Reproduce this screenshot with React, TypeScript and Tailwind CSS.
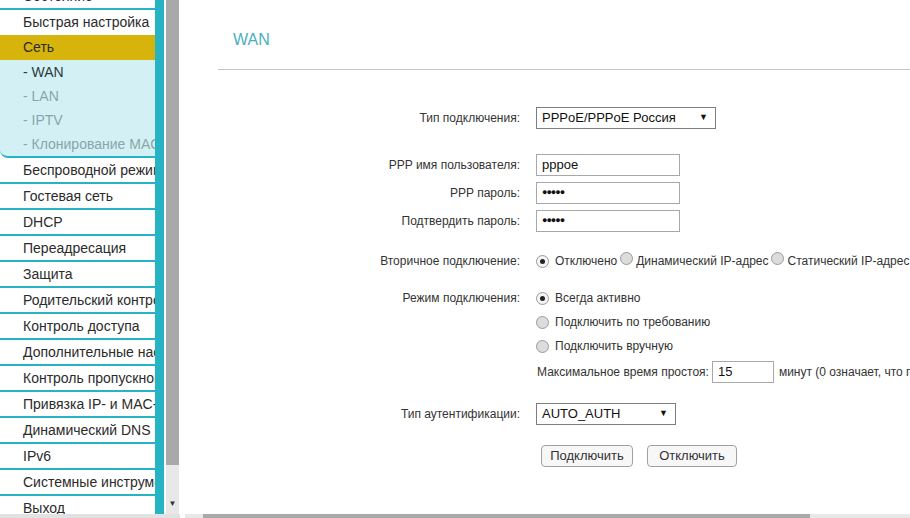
import React from "react";

const menuTop = ["Быстрая настройка"];
const subItems = ["- WAN", "- LAN", "- IPTV", "- Клонирование MAC"];
const menuRest = [
  "Беспроводной режим",
  "Гостевая сеть",
  "DHCP",
  "Переадресация",
  "Защита",
  "Родительский контроль",
  "Контроль доступа",
  "Дополнительные настройки",
  "Контроль пропускной способности",
  "Привязка IP- и MAC-адресов",
  "Динамический DNS",
  "IPv6",
  "Системные инструменты",
  "Выход",
];

function Line() {
  return <div className="h-[2px] bg-[#26b4c4] shrink-0" />;
}

function MenuRow({ text }: { text: string }) {
  return (
    <div className="h-[24px] shrink-0 bg-white pl-[23px] leading-[24px] whitespace-nowrap text-[14px] text-[#2b2b2b]">
      {text}
    </div>
  );
}

function Radio({ checked }: { checked?: boolean }) {
  return (
    <span
      className={`inline-flex h-[13px] w-[13px] shrink-0 items-center justify-center rounded-full border border-[#9a9a9a] ${
        checked ? "bg-[#f4f4f4]" : "bg-[#dcdcdc]"
      }`}
    >
      {checked && <span className="h-[5px] w-[5px] rounded-full bg-[#222]" />}
    </span>
  );
}

function Select({ value, width }: { value: string; width: string }) {
  return (
    <div
      className={`flex h-[22px] ${width} items-center justify-between border border-[#7d7d7d] bg-white pl-[5px] pr-[7px] text-[13px] text-[#111]`}
    >
      <span>{value}</span>
      <span className="text-[9px]">▼</span>
    </div>
  );
}

function TextInput({ value, width, dots }: { value: string; width: string; dots?: boolean }) {
  return (
    <div
      className={`flex h-[22px] ${width} items-center border border-[#a8a8a8] bg-white pl-[5px] ${
        dots ? "text-[9px] tracking-[-1px]" : "text-[13px]"
      } text-[#111]`}
    >
      {value}
    </div>
  );
}

function Row({ label, children, className = "" }: { label?: string; children: React.ReactNode; className?: string }) {
  return (
    <div className={`flex items-center ${className}`}>
      <div className="w-[335px] shrink-0 text-right text-[12px] text-[#333]">{label}</div>
      <div className="ml-[16px] flex items-center">{children}</div>
    </div>
  );
}

export default function App() {
  return (
    <div
      className="flex h-[518px] w-[910px] overflow-hidden bg-white"
      style={{ fontFamily: '"Liberation Sans", Arial, sans-serif' }}
    >
      {/* left frame */}
      <div className="flex w-[180px] shrink-0 flex-col">
        <div className="flex min-h-0 flex-1">
          <div className="flex w-[155px] shrink-0 flex-col overflow-hidden">
            <div className="-mt-[16px]">
              <MenuRow text="Состояние" />
            </div>
            <Line />
            {menuTop.map((t) => (
              <div key={t} className="h-[25px] bg-white pl-[23px] leading-[25px] text-[14px] text-[#2b2b2b]">
                {t}
              </div>
            ))}
            <div className="h-[25px] shrink-0 bg-[#d6b40c] pl-[23px] leading-[25px] text-[14px] text-[#2b2b2b]">
              Сеть
            </div>
            <div className="shrink-0 rounded-bl-[8px] border-b-2 border-[#26b4c4] bg-[#d3f1f5]">
              {subItems.map((s, i) => (
                <div
                  key={s}
                  className={`h-[24px] pl-[23px] leading-[24px] whitespace-nowrap text-[14px] ${
                    i === 0 ? "text-[#2b3a3d]" : "text-[#8aa5aa]"
                  }`}
                >
                  {s}
                </div>
              ))}
            </div>
            {menuRest.map((t, i) => (
              <React.Fragment key={t}>
                {i > 0 && <Line />}
                <MenuRow text={t} />
              </React.Fragment>
            ))}
          </div>
          <div className="w-[9px] shrink-0 bg-[#26b4c4]" />
          <div className="w-[2px] shrink-0 bg-white" />
          <div className="flex w-[13px] shrink-0 flex-col bg-[#e8e8e8]">
            <div className="h-[465px] bg-[#a9a9a9]" />
            <div className="flex flex-1 items-end justify-center pb-[4px] text-[8px] text-[#333]">▼</div>
          </div>
        </div>
        <div className="h-[4px] shrink-0 bg-[#e2e2e2]" />
      </div>

      <div className="w-[5px] shrink-0" />

      {/* content frame */}
      <div className="flex min-w-0 flex-1 flex-col">
        <div className="min-h-0 flex-1 overflow-hidden">
          <div className="h-[69px] pl-[48px] pt-[31px] text-[16px] leading-[18px] text-[#4aafc0]">WAN</div>
          <div className="ml-[33px] h-[1px] bg-[#c4c4c4]" />

          <Row label="Тип подключения:" className="mt-[37px]">
            <Select value="PPPoE/PPPoE Россия" width="w-[180px]" />
          </Row>

          <Row label="PPP имя пользователя:" className="mt-[25px]">
            <TextInput value="pppoe" width="w-[144px]" />
          </Row>
          <Row label="PPP пароль:" className="mt-[6px]">
            <TextInput value="●●●●●" width="w-[144px]" dots />
          </Row>
          <Row label="Подтвердить пароль:" className="mt-[6px]">
            <TextInput value="●●●●●" width="w-[144px]" dots />
          </Row>

          <Row label="Вторичное подключение:" className="mt-[19px] h-[20px]">
            <div className="flex items-center whitespace-nowrap text-[12px] text-[#333]">
              <Radio checked />
              <span className="ml-[6px]">Отключено</span>
              <span className="ml-[3px]"><Radio /></span>
              <span className="ml-[3px]">Динамический IP-адрес</span>
              <span className="ml-[2px]"><Radio /></span>
              <span className="ml-[4px]">Статический IP-адрес</span>
            </div>
          </Row>

          <Row label="Режим подключения:" className="mt-[17px] h-[20px]">
            <div className="flex items-center text-[12px] text-[#333]">
              <Radio checked />
              <span className="ml-[6px]">Всегда активно</span>
            </div>
          </Row>
          <Row className="mt-[4px] h-[20px]">
            <div className="flex items-center text-[12px] text-[#333]">
              <Radio />
              <span className="ml-[6px]">Подключить по требованию</span>
            </div>
          </Row>
          <Row className="mt-[4px] h-[20px]">
            <div className="flex items-center text-[12px] text-[#333]">
              <Radio />
              <span className="ml-[6px]">Подключить вручную</span>
            </div>
          </Row>
          <Row className="mt-[5px]">
            <div className="flex items-center whitespace-nowrap text-[12px] text-[#333]">
              <span className="ml-[1px]">Максимальное время простоя:</span>
              <span className="ml-[3px]">
                <TextInput value="15" width="w-[62px]" />
              </span>
              <span className="ml-[5px]">минут (0 означает, что подключение активно всегда)</span>
            </div>
          </Row>

          <Row label="Тип аутентификации:" className="mt-[20px]">
            <Select value="AUTO_AUTH" width="w-[140px]" />
          </Row>

          <Row className="mt-[20px]">
            <div className="ml-[5px] flex items-center gap-[14px]">
              <button className="h-[22px] w-[92px] rounded-[4px] border border-[#a0a0a0] bg-[#f7f7f7] text-[13px] text-[#333]">
                Подключить
              </button>
              <button className="h-[22px] w-[90px] rounded-[4px] border border-[#a0a0a0] bg-[#f7f7f7] text-[13px] text-[#333]">
                Отключить
              </button>
            </div>
          </Row>
        </div>
        <div className="flex h-[4px] shrink-0 bg-[#e8e8e8]">
          <div className="w-[18px]" />
          <div className="w-[607px] bg-[#a9a9a9]" />
        </div>
      </div>
    </div>
  );
}
